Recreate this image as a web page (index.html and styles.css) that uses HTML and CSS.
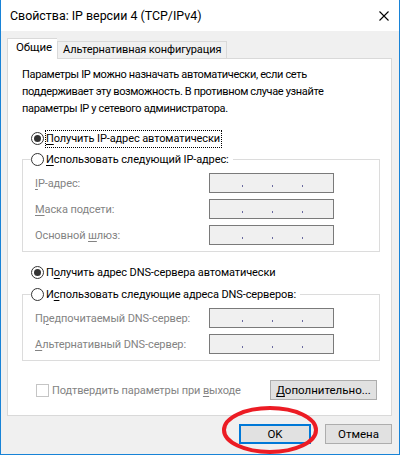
FILE: index.html
```html
<!DOCTYPE html>
<html lang="ru">
<head>
  <meta charset="UTF-8">
  <title>Свойства: IP версии 4 (TCP/IPv4)</title>
  <link rel="stylesheet" href="styles.css">
</head>
<body>
  <div class="window">
    <div class="titlebar">
      <span class="title">Свойства: IP версии 4 (TCP/IPv4)</span>
      <svg class="close" width="10" height="10" viewBox="0 0 10 10">
        <path d="M0.5 0.5 L9.5 9.5 M9.5 0.5 L0.5 9.5" stroke="#000" stroke-width="1.1" fill="none"/>
      </svg>
    </div>

    <div class="client">
      <div class="tabs">
        <div class="tab active">Общие</div>
        <div class="tab">Альтернативная конфигурация</div>
      </div>

      <div class="panel">
        <p class="intro">Параметры IP можно назначать автоматически, если сеть поддерживает эту возможность. В противном случае узнайте параметры IP у сетевого администратора.</p>

        <div class="option first-option">
          <span class="radio checked"></span>
          <span class="focus"><u>П</u>олучить IP-адрес автоматически</span>
        </div>

        <fieldset class="group">
          <legend class="option">
            <span class="radio"></span>
            <span><u>И</u>спользовать следующий IP-адрес:</span>
          </legend>
          <div class="field">
            <span class="label"><u>I</u>P-адрес:</span>
            <div class="ip"><i></i><i></i><i></i></div>
          </div>
          <div class="field">
            <span class="label"><u>М</u>аска подсети:</span>
            <div class="ip"><i></i><i></i><i></i></div>
          </div>
          <div class="field">
            <span class="label">Основной <u>ш</u>люз:</span>
            <div class="ip"><i></i><i></i><i></i></div>
          </div>
        </fieldset>

        <div class="option dns-option">
          <span class="radio checked"></span>
          <span>П<u>о</u>лучить адрес DNS-сервера автоматически</span>
        </div>

        <fieldset class="group">
          <legend class="option">
            <span class="radio"></span>
            <span>И<u>с</u>пользовать следующие адреса DNS-серверов:</span>
          </legend>
          <div class="field">
            <span class="label">П<u>р</u>едпочитаемый DNS-сервер:</span>
            <div class="ip"><i></i><i></i><i></i></div>
          </div>
          <div class="field">
            <span class="label"><u>А</u>льтернативный DNS-сервер:</span>
            <div class="ip"><i></i><i></i><i></i></div>
          </div>
        </fieldset>

        <div class="panel-footer">
          <div class="check-row">
            <span class="checkbox"></span>
            <span class="label">Подтвердить параметры при <u>в</u>ыходе</span>
          </div>
          <button class="btn more-btn"><u>Д</u>ополнительно...</button>
        </div>
      </div>

      <div class="dialog-buttons">
        <button class="btn ok-btn">OK</button>
        <button class="btn">Отмена</button>
      </div>
    </div>

    <svg class="mark" width="110" height="60" viewBox="0 0 110 60">
      <ellipse cx="52" cy="26" rx="46" ry="22" fill="none" stroke="#ec1c24" stroke-width="4"/>
    </svg>
  </div>
</body>
</html>
```

FILE: styles.css
```css
* {
  box-sizing: border-box;
}
body {
  margin: 0;
  font-family: Roboto, "Noto Sans", sans-serif;
  font-size: 11px;
  letter-spacing: -0.1px;
  color: #000;
  background: #fff;
}
u {
  text-decoration: underline;
  text-underline-offset: 2px;
}
.window {
  position: relative;
  width: 400px;
  height: 455px;
  border: 1px solid #1883d7;
  border-top: none;
  display: flex;
  flex-direction: column;
  overflow: hidden;
}
.titlebar {
  height: 31px;
  background: #fff;
  display: flex;
  align-items: center;
  justify-content: space-between;
  padding: 0 10px 0 9px;
  flex-shrink: 0;
}
.title {
  font-size: 12.4px;
  letter-spacing: 0;
}
.close {
  margin-top: 1px;
}
.client {
  flex: 1;
  background: #f0f0f0;
  padding: 7px 7px 0 6px;
  display: flex;
  flex-direction: column;
}
.tabs {
  display: flex;
  align-items: flex-end;
  height: 20px;
  position: relative;
  z-index: 1;
}
.tab {
  height: 17px;
  line-height: 15px;
  padding: 0 5px;
  border: 1px solid #d9d9d9;
  border-bottom: none;
  background: #f0f0f0;
  white-space: nowrap;
}
.tab.active {
  height: 21px;
  width: 50px;
  padding: 1px 0 0 8px;
  background: #fff;
  border-right: none;
  margin-bottom: -1px;
  font-size: 11.5px;
}
.panel {
  background: #fff;
  border: 1px solid #d9d9d9;
  height: 358px;
  padding: 7px 14px 0 14px;
}
.intro {
  margin: 0;
  line-height: 17px;
  letter-spacing: -0.35px;
}
.option {
  display: flex;
  align-items: center;
  gap: 2px;
  height: 17px;
  line-height: 15px;
  white-space: nowrap;
}
.first-option {
  margin: 13px 0 4px 9px;
}
.focus {
  outline: 1px dotted #000;
  outline-offset: 0;
  padding: 0 1px 1px 0;
}
.radio {
  width: 13px;
  height: 13px;
  border: 1px solid #333;
  border-radius: 50%;
  display: flex;
  align-items: center;
  justify-content: center;
  background: #fff;
  flex-shrink: 0;
}
.radio.checked::after {
  content: "";
  width: 7px;
  height: 7px;
  border-radius: 50%;
  background: #333;
}
.group {
  margin: 0;
  border: 1px solid #dcdcdc;
  padding: 5px 0 6px 12px;
  width: 358px;
}
.group legend {
  padding: 0 4px 0 0;
  margin-left: -4px;
}
.field {
  display: flex;
  align-items: center;
  justify-content: space-between;
  width: 299px;
  height: 20px;
  margin-bottom: 6px;
  white-space: nowrap;
}
.field:last-child {
  margin-bottom: 0;
}
.label {
  color: #838383;
}
.ip {
  width: 125px;
  height: 20px;
  border: 1px solid #7a7a7a;
  background: #f0f0f0;
  display: flex;
  align-items: flex-end;
  padding: 0 0 5px 32px;
  gap: 29px;
}
.ip i {
  width: 1px;
  height: 2px;
  background: #6a6aa0;
}
.dns-option {
  margin: 12px 0 5px 9px;
}
.panel-footer {
  display: flex;
  justify-content: space-between;
  align-items: center;
  margin-top: 19px;
}
.check-row {
  display: flex;
  align-items: center;
  gap: 3px;
  margin-left: 14px;
}
.checkbox {
  width: 13px;
  height: 13px;
  border: 1px solid #c5c5c5;
  background: #fff;
}
.btn {
  font-family: inherit;
  font-size: 11.5px;
  color: #000;
  height: 20px;
  padding: 0;
  background: #e1e1e1;
  border: 1px solid #adadad;
  border-radius: 0;
  line-height: 16px;
}
.more-btn {
  width: 107px;
}
.dialog-buttons {
  display: flex;
  justify-content: flex-end;
  gap: 14px;
  padding: 8px 0 0 0;
}
.dialog-buttons .btn {
  width: 67px;
}
.dialog-buttons .ok-btn {
  width: 72px;
  border: 2px solid #0078d7;
}
.mark {
  position: absolute;
  left: 217px;
  top: 404px;
}
```
